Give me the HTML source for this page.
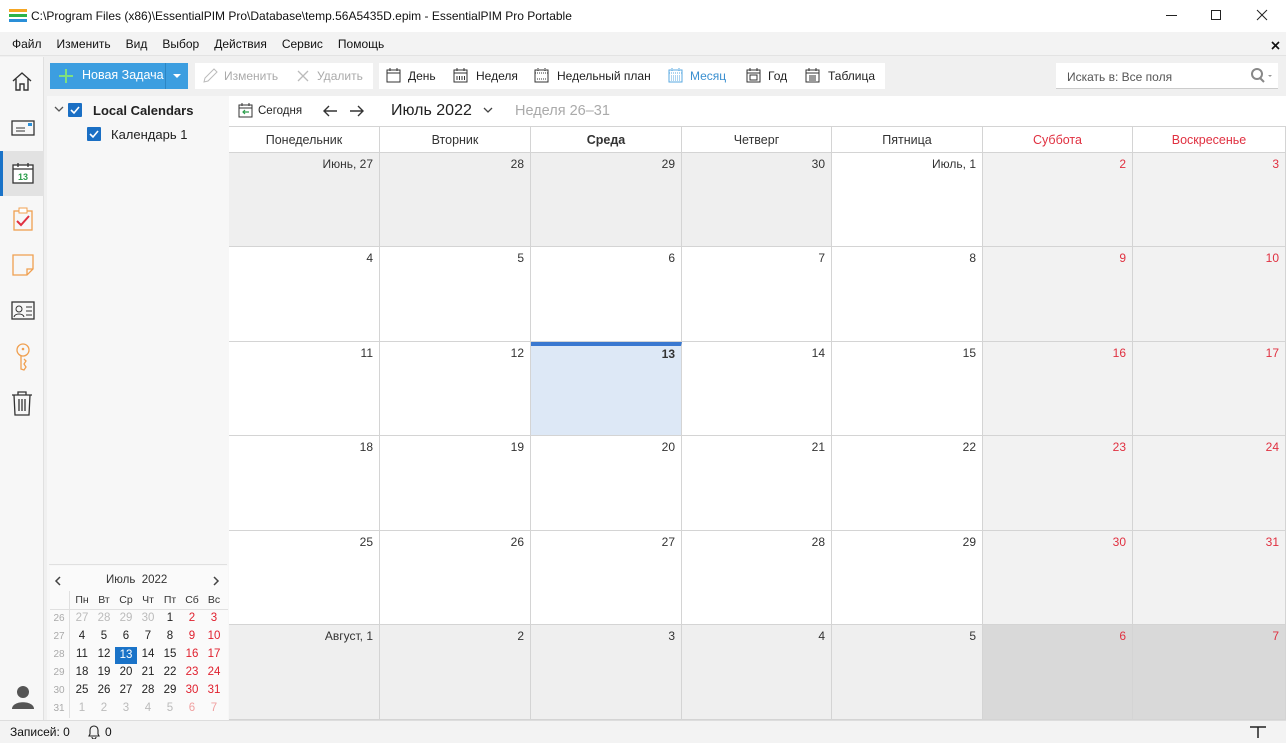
<!DOCTYPE html>
<html><head><meta charset="utf-8">
<style>
*{margin:0;padding:0;box-sizing:border-box}
body{width:1286px;height:743px;position:relative;overflow:hidden;background:#f0f0f0;font-family:"Liberation Sans","Noto Sans CJK SC",sans-serif;font-size:12px;color:#222}
.a{position:absolute}
.menu span{margin-right:15px}
.c{position:absolute;border-right:1px solid #d4d4d4;border-bottom:1px solid #d4d4d4;text-align:right;padding:4px 6px;font-size:12px;color:#333;background:#fff}
.g{background:#efefef}
.w{background:#f2f2f2;color:#e03040}
.d{background:#d9d9d9;color:#e03040}
.h{position:absolute;top:127px;height:26px;line-height:26px;text-align:center;font-size:12.5px;border-right:1px solid #d4d4d4;border-bottom:1px solid #d4d4d4;background:#fff;color:#333}
.m{position:absolute;width:22px;text-align:center;font-size:11.5px;color:#222}
.mw{color:#aaa;font-size:10px}
.ml{color:#bbb}
.mr{color:#e0202e}
.mrl{color:#f0a0a0}
.tb{position:absolute;top:64px;height:24px;line-height:24px;font-size:12px;color:#222}
</style></head><body>
<!-- title bar -->
<div class="a" style="left:0;top:0;width:1286px;height:32px;background:#fff"></div>
<svg class="a" style="left:9px;top:9px" width="18" height="14"><rect y="0" width="18" height="3" fill="#f5a623"/><rect y="5" width="18" height="3" fill="#2cb34a"/><rect y="10" width="18" height="3" fill="#2a8fd8"/></svg>
<div class="a" style="left:31px;top:9px;font-size:12px;color:#111">C:\Program Files (x86)\EssentialPIM Pro\Database\temp.56A5435D.epim - EssentialPIM Pro Portable</div>
<div class="a" style="left:1166px;top:15px;width:11px;height:1px;background:#222"></div>
<div class="a" style="left:1211px;top:10px;width:10px;height:10px;border:1px solid #222"></div>
<svg class="a" style="left:1256px;top:9px" width="12" height="12"><path d="M1 1L11 11M11 1L1 11" stroke="#222" stroke-width="1"/></svg>
<!-- menu -->
<div class="a" style="left:0;top:32px;width:1286px;height:24px;background:#f3f3f3;border-bottom:1px solid #e3e3e3"></div>
<div class="a menu" style="left:12px;top:37px;font-size:12px;color:#111"><span>Файл</span><span>Изменить</span><span>Вид</span><span>Выбор</span><span>Действия</span><span>Сервис</span><span>Помощь</span></div>
<svg class="a" style="left:1271px;top:41px" width="9" height="9"><path d="M1 1L8 8M8 1L1 8" stroke="#111" stroke-width="1.6"/></svg>
<!-- left sidebar -->
<div class="a" style="left:0;top:57px;width:44px;height:663px;background:#f7f7f7;border-right:1px solid #e0e0e0"></div>
<svg class="a" style="left:11px;top:70px" width="22" height="22"><path d="M2 11L11 3L20 11M5 9V20H9V14H13V20H17V9" fill="none" stroke="#333" stroke-width="1.4"/></svg>
<svg class="a" style="left:11px;top:120px" width="24" height="16"><rect x="1" y="1" width="22" height="14" fill="none" stroke="#333" stroke-width="1.3"/><rect x="17" y="3" width="4" height="3" fill="#2a8fd8"/><path d="M5 8H14M5 11H14" stroke="#333"/></svg>
<div class="a" style="left:0;top:151px;width:44px;height:45px;background:#e2e2e2"></div>
<div class="a" style="left:0;top:151px;width:3px;height:45px;background:#1a73c8"></div>
<svg class="a" style="left:11px;top:161px" width="24" height="24"><rect x="2" y="4" width="20" height="18" fill="#fff" stroke="#333" stroke-width="1.3"/><path d="M2 8H22M7 2V6M17 2V6" stroke="#333" stroke-width="1.3"/><text x="12" y="19" font-size="9" text-anchor="middle" fill="#2a9d4a" font-family="Liberation Sans" font-weight="bold">13</text></svg>
<svg class="a" style="left:12px;top:207px" width="22" height="24"><rect x="2" y="4" width="18" height="19" fill="none" stroke="#f0a050" stroke-width="1.3"/><rect x="7" y="1" width="8" height="5" fill="#fff" stroke="#f0a050"/><path d="M5 14L9 18L17 9" fill="none" stroke="#e03040" stroke-width="2"/></svg>
<svg class="a" style="left:11px;top:253px" width="24" height="24"><path d="M2 2H22V16L16 22H2Z" fill="none" stroke="#f0a050" stroke-width="1.3"/><path d="M16 22V16H22" fill="none" stroke="#f0a050" stroke-width="1.3"/></svg>
<svg class="a" style="left:11px;top:301px" width="24" height="20"><rect x="1" y="1" width="22" height="17" fill="none" stroke="#333" stroke-width="1.3"/><circle cx="8" cy="8" r="3" fill="none" stroke="#333"/><path d="M3 16C4 12 12 12 13 16M15 6H21M15 10H21M15 14H21" fill="none" stroke="#333"/></svg>
<svg class="a" style="left:14px;top:343px" width="18" height="28"><circle cx="9" cy="7" r="6" fill="none" stroke="#f0a050" stroke-width="1.3"/><circle cx="9" cy="6" r="1.3" fill="#f0a050"/><path d="M7 13V26L10 27L12 24L10 21L12 18L10 16" fill="none" stroke="#f0a050" stroke-width="1.3"/></svg>
<svg class="a" style="left:11px;top:390px" width="22" height="26"><path d="M1 5H21M7 5V2H15V5M3 5L4 25H18L19 5M8 9V21M11 9V21M14 9V21" fill="none" stroke="#333" stroke-width="1.3"/></svg>
<svg class="a" style="left:11px;top:684px" width="24" height="26"><circle cx="12" cy="8" r="6" fill="#555"/><path d="M1 25C1 16 23 16 23 25Z" fill="#555"/></svg>
<!-- toolbar -->
<div class="a" style="left:50px;top:63px;width:138px;height:26px;background:#3c9ee0"></div>
<div class="a" style="left:165px;top:63px;width:1px;height:26px;background:#2d86c4"></div>
<svg class="a" style="left:58px;top:68px" width="16" height="16"><path d="M8 1V15M1 8H15" stroke="#7fe07f" stroke-width="2"/></svg>
<div class="a" style="left:82px;top:68px;color:#fff;font-size:12.5px">Новая Задача</div>
<svg class="a" style="left:173px;top:74px" width="8" height="5"><path d="M0 0H8L4 4Z" fill="#fff"/></svg>
<div class="a" style="left:195px;top:63px;width:178px;height:26px;background:#fff"></div>
<svg class="a" style="left:202px;top:68px" width="16" height="16"><path d="M2 14L3 10L12 1L15 4L6 13Z" fill="none" stroke="#bbb"/></svg>
<div class="tb" style="left:224px;color:#aaa">Изменить</div>
<svg class="a" style="left:297px;top:70px" width="12" height="12"><path d="M1 1L11 11M11 1L1 11" stroke="#bbb" stroke-width="1.3"/></svg>
<div class="tb" style="left:317px;color:#aaa">Удалить</div>
<div class="a" style="left:379px;top:63px;width:506px;height:26px;background:#fff"></div>
<svg class="a" style="left:386px;top:68px" width="16" height="16"><rect x="1" y="2" width="13" height="12" fill="none" stroke="#333"/><path d="M1 5H14M4 0V3M11 0V3" stroke="#333"/></svg>
<div class="tb" style="left:408px">День</div>
<svg class="a" style="left:453px;top:68px" width="16" height="16"><rect x="1" y="2" width="13" height="12" fill="none" stroke="#333"/><path d="M1 5H14M4 0V3M11 0V3M4 8V12M6.5 8V12M9 8V12M11.5 8V12" stroke="#333"/></svg>
<div class="tb" style="left:476px">Неделя</div>
<svg class="a" style="left:534px;top:68px" width="16" height="16"><rect x="1" y="2" width="13" height="12" fill="none" stroke="#333"/><path d="M1 5H14M4 0V3M11 0V3M3 11H12" stroke="#333" stroke-dasharray="1 1"/></svg>
<div class="tb" style="left:557px">Недельный план</div>
<svg class="a" style="left:668px;top:68px" width="16" height="16"><rect x="1" y="2" width="13" height="12" fill="none" stroke="#5aa8e0"/><path d="M1 5H14M4 0V3M11 0V3M3 8H12M3 10H12M3 12H12" stroke="#5aa8e0" stroke-dasharray="1 1"/></svg>
<div class="tb" style="left:690px;color:#3a8fd0">Месяц</div>
<svg class="a" style="left:746px;top:68px" width="16" height="16"><rect x="1" y="2" width="13" height="12" fill="none" stroke="#333"/><path d="M1 5H14M4 0V3M11 0V3" stroke="#333"/><rect x="4" y="7" width="7" height="5" fill="none" stroke="#333"/></svg>
<div class="tb" style="left:768px">Год</div>
<svg class="a" style="left:805px;top:68px" width="16" height="16"><rect x="1" y="2" width="13" height="12" fill="none" stroke="#333"/><path d="M1 5H14M4 0V3M11 0V3M4 8H11M4 10H11M4 12H11" stroke="#333"/></svg>
<div class="tb" style="left:828px">Таблица</div>
<div class="a" style="left:1056px;top:63px;width:222px;height:26px;background:#fff;border-bottom:1px solid #ccc"></div>
<div class="a" style="left:1067px;top:70px;font-size:12px;color:#555">Искать в: Все поля</div>
<svg class="a" style="left:1250px;top:68px" width="24" height="16"><circle cx="7" cy="6" r="5" fill="none" stroke="#888" stroke-width="2"/><path d="M10 10L14 14" stroke="#888" stroke-width="2"/><path d="M18 7H22L20 9Z" fill="#999"/></svg>
<!-- left panel -->
<div class="a" style="left:47px;top:96px;width:182px;height:624px;background:#f7f7f7"></div>
<svg class="a" style="left:54px;top:105px" width="10" height="8"><path d="M1 2L5 6L9 2" fill="none" stroke="#555" stroke-width="1.3"/></svg>
<svg class="a" style="left:68px;top:103px" width="14" height="14"><rect width="14" height="14" rx="1" fill="#1a6fc4"/><path d="M3 7L6 10L11 4" fill="none" stroke="#fff" stroke-width="1.6"/></svg>
<div class="a" style="left:93px;top:103px;font-size:13px;font-weight:bold;color:#222">Local Calendars</div>
<svg class="a" style="left:87px;top:127px" width="14" height="14"><rect width="14" height="14" rx="1" fill="#1a6fc4"/><path d="M3 7L6 10L11 4" fill="none" stroke="#fff" stroke-width="1.6"/></svg>
<div class="a" style="left:111px;top:127px;font-size:13px;color:#222">Календарь 1</div>
<div class="a" style="left:49px;top:564px;width:178px;height:1px;background:#e0e0e0"></div>
<div class="a" style="left:50px;top:566px;width:178px;height:154px;background:#fafafa"></div>
<svg class="a" style="left:54px;top:576px" width="8" height="10"><path d="M6 1L2 5L6 9" fill="none" stroke="#444" stroke-width="1.5"/></svg>
<svg class="a" style="left:212px;top:576px" width="8" height="10"><path d="M2 1L6 5L2 9" fill="none" stroke="#444" stroke-width="1.5"/></svg>
<div class="a" style="left:106px;top:574px;font-size:11.5px;color:#333">Июль&nbsp; 2022</div>
<div class="a" style="left:69px;top:591px;width:1px;height:127px;background:#e0e0e0"></div>
<div class="a" style="left:50px;top:609px;width:178px;height:1px;background:#e0e0e0"></div>
<div id="mini"></div>
<!-- main -->
<div class="a" style="left:229px;top:96px;width:1057px;height:31px;background:#fff;border-bottom:1px solid #d4d4d4"></div>
<svg class="a" style="left:238px;top:103px" width="16" height="16"><rect x="1" y="2" width="13" height="12" fill="none" stroke="#333"/><path d="M1 5H14M4 0V3M11 0V3" stroke="#333"/><path d="M11 9H5M7 7L5 9L7 11" fill="none" stroke="#2a9d4a" stroke-width="1.2"/></svg>
<div class="a" style="left:258px;top:105px;font-size:11.5px;color:#222">Сегодня</div>
<svg class="a" style="left:322px;top:104px" width="16" height="14"><path d="M15 7H2M7 2L2 7L7 12" fill="none" stroke="#333" stroke-width="1.4"/></svg>
<svg class="a" style="left:349px;top:104px" width="16" height="14"><path d="M1 7H14M9 2L14 7L9 12" fill="none" stroke="#333" stroke-width="1.4"/></svg>
<div class="a" style="left:391px;top:102px;font-size:16px;color:#222">Июль 2022</div>
<svg class="a" style="left:483px;top:107px" width="10" height="7"><path d="M1 1L5 5L9 1" fill="none" stroke="#444" stroke-width="1.3"/></svg>
<div class="a" style="left:515px;top:103px;font-size:14.5px;color:#aaa">Неделя 26–31</div>
<div id="cal"></div>
<!-- status bar -->
<div class="a" style="left:0;top:720px;width:1286px;height:23px;background:#f3f3f3;border-top:1px solid #ddd"></div>
<div class="a" style="left:10px;top:725px;font-size:12px;color:#111">Записей: 0</div>
<svg class="a" style="left:87px;top:724px" width="14" height="15"><path d="M2 12H12L11 10V6A4 4 0 0 0 3 6V10Z M5 13A2 2 0 0 0 9 13" fill="none" stroke="#222" stroke-width="1.1"/></svg>
<div class="a" style="left:105px;top:725px;font-size:12px;color:#111">0</div>
<svg class="a" style="left:1249px;top:725px" width="18" height="14"><path d="M1 2H17M9 2V13" stroke="#222" stroke-width="1.5"/></svg>
<script>
var cols=[229,380,531,682,832,983,1133,1286],rows=[153,247,342,436,531,625,720];
var names=["Понедельник","Вторник","Среда","Четверг","Пятница","Суббота","Воскресенье"];
var h="";
for(var i=0;i<7;i++){h+='<div class="h" style="left:'+cols[i]+'px;width:'+(cols[i+1]-cols[i])+'px;'+(i>4?'color:#e03040;':'')+(i==2?'font-weight:bold;':'')+'">'+names[i]+'</div>';}
var data=[["Июнь, 27","28","29","30","Июль, 1","2","3"],[4,5,6,7,8,9,10],[11,12,13,14,15,16,17],[18,19,20,21,22,23,24],[25,26,27,28,29,30,31],["Август, 1","2","3","4","5","6","7"]];
for(var r=0;r<6;r++)for(var c=0;c<7;c++){var cl="c";
 if(r==0&&c<4)cl+=" g";else if(r==5&&c<5)cl+=" g";else if(r==5)cl+=" d";else if(c>4)cl+=" w";
 var st="left:"+cols[c]+"px;top:"+rows[r]+"px;width:"+(cols[c+1]-cols[c])+"px;height:"+(rows[r+1]-rows[r])+"px;";
 if(r==2&&c==2)st+="background:#dde8f6;border-top:4px solid #3a78d0;padding-top:1px;font-weight:bold;";
 h+='<div class="'+cl+'" style="'+st+'">'+data[r][c]+'</div>';}
document.getElementById("cal").innerHTML=h;
var m="",mx=[59,82,104,126,148,170,192,214],dn=["Пн","Вт","Ср","Чт","Пт","Сб","Вс"];
for(var i=0;i<7;i++)m+='<div class="m" style="left:'+(mx[i+1]-11)+'px;top:594px;font-size:10.5px;color:#333">'+dn[i]+'</div>';
var md=[[27,28,29,30,1,2,3],[4,5,6,7,8,9,10],[11,12,13,14,15,16,17],[18,19,20,21,22,23,24],[25,26,27,28,29,30,31],[1,2,3,4,5,6,7]];
var my=[612,630,648,666,684,702];
for(var r=0;r<6;r++){m+='<div class="m mw" style="left:'+(mx[0]-11)+'px;top:'+(my[r]+1)+'px">'+(26+r)+'</div>';
 for(var c=0;c<7;c++){var light=(r==0&&c<4)||r==5;var cl="m";if(c>4)cl+=light?" mrl":" mr";else if(light)cl+=" ml";
 var st="left:"+(mx[c+1]-11)+"px;top:"+my[r]+"px;";
 if(r==2&&c==2)st+="background:#1a73c8;color:#fff;height:17px;top:"+(my[r]-1)+"px;line-height:17px;";
 m+='<div class="'+cl+'" style="'+st+'">'+md[r][c]+'</div>';}}
document.getElementById("mini").innerHTML=m;
</script>
</body></html>
